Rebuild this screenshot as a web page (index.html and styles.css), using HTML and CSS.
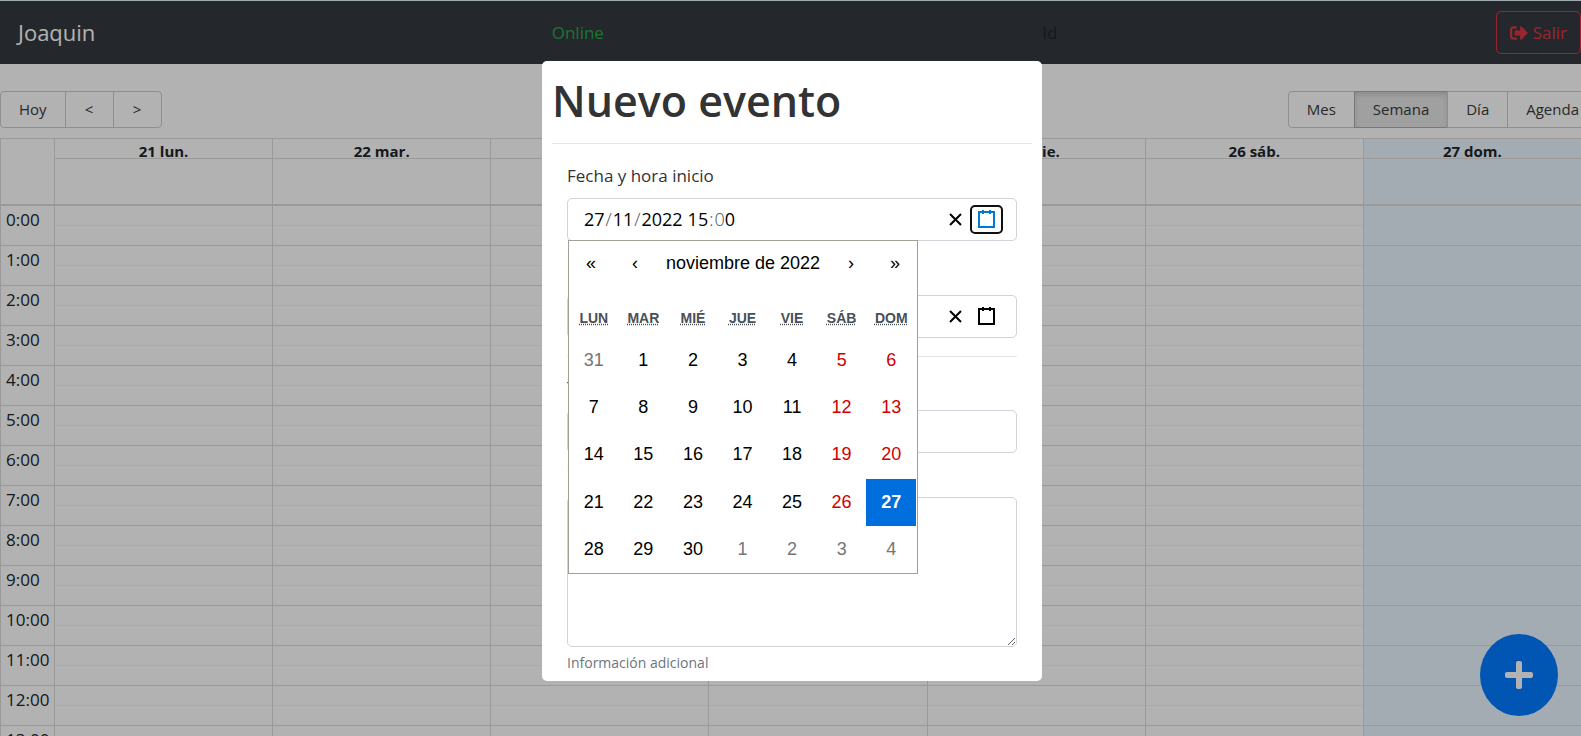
FILE: index.html
```html
<!DOCTYPE html>
<html lang="es">
<head>
<meta charset="utf-8">
<title>Calendario</title>
<link rel="stylesheet" href="styles.css">
</head>
<body>
<div class="app">
  <nav class="navbar">
    <span class="brand">Joaquin</span>
    <span class="status">Online</span>
    <span class="user-id">Id</span>
    <button type="button" class="logout"><svg viewBox="0 0 512 512" aria-hidden="true"><path fill="currentColor" d="M497 273L329 441c-15 15-41 4.500-41-17v-96H152c-13.300 0-24-10.700-24-24v-96c0-13.300 10.700-24 24-24h136V88c0-21.400 25.900-32 41-17l168 168c9.300 9.400 9.300 24.600 0 34zM192 436v-40c0-6.600-5.400-12-12-12H96c-17.700 0-32-14.300-32-32V160c0-17.700 14.300-32 32-32h84c6.600 0 12-5.400 12-12V76c0-6.600-5.400-12-12-12H96c-53 0-96 43-96 96v192c0 53 43 96 96 96h84c6.600 0 12-5.400 12-12z"/></svg>Salir</button>
  </nav>
  <div class="toolbar">
    <div class="btn-group">
      <button type="button">Hoy</button><button type="button">&lt;</button><button type="button">&gt;</button>
    </div>
    <div class="btn-group views">
      <button type="button">Mes</button><button type="button" class="active">Semana</button><button type="button">Día</button><button type="button">Agenda</button>
    </div>
  </div>
  <main class="week">
    <div class="week-header">
      <div class="corner"></div>
      <div class="day-head"><b>21 lun.</b></div>
      <div class="day-head"><b>22 mar.</b></div>
      <div class="day-head"><b>23 mié.</b></div>
      <div class="day-head"><b>24 jue.</b></div>
      <div class="day-head"><b>25 vie.</b></div>
      <div class="day-head"><b>26 sáb.</b></div>
      <div class="day-head today"><b>27 dom.</b></div>
    </div>
    <div class="week-body">
      <div class="gutter">
        <div>0:00</div><div>1:00</div><div>2:00</div><div>3:00</div><div>4:00</div><div>5:00</div><div>6:00</div><div>7:00</div><div>8:00</div><div>9:00</div><div>10:00</div><div>11:00</div><div>12:00</div><div>13:00</div>
      </div>
      <div class="day"></div><div class="day"></div><div class="day"></div><div class="day"></div><div class="day"></div><div class="day"></div><div class="day today"></div>
    </div>
  </main>
  <button type="button" class="fab" aria-label="Añadir evento"><svg viewBox="0 0 448 512" aria-hidden="true"><path fill="currentColor" d="M416 208H272V64c0-17.700-14.300-32-32-32h-32c-17.700 0-32 14.300-32 32v144H32c-17.700 0-32 14.300-32 32v32c0 17.700 14.300 32 32 32h144v144c0 17.700 14.300 32 32 32h32c17.700 0 32-14.300 32-32V304h144c17.700 0 32-14.300 32-32v-32c0-17.700-14.300-32-32-32z"/></svg></button>
</div>

<div class="overlay">
  <div class="modal" role="dialog" aria-labelledby="modal-title">
    <h1 id="modal-title">Nuevo evento</h1>
    <hr class="title-rule">
    <form class="form">
      <div class="field">
        <label for="start-day">Fecha y hora inicio</label>
        <div class="picker">
          <div class="parts">
            <input id="start-day" class="two" value="27" aria-label="Fecha y hora inicio, día"><span>/</span><input class="two" value="11" aria-label="Mes"><span>/</span><input class="four" value="2022" aria-label="Año"><span class="space"></span><input class="two" value="15" aria-label="Hora"><span>:</span><span>0</span><input class="one" value="0" aria-label="Minutos">
          </div>
          <button type="button" class="clear" aria-label="Borrar"><svg viewBox="0 0 19 19"><path d="M4 4L15 15M15 4L4 15"/></svg></button>
          <button type="button" class="open focused" aria-label="Abrir calendario"><svg viewBox="0 0 19 19"><path d="M2 2H17V17H2ZM6 0V4M13 0V4"/></svg></button>
          <div class="calendar">
            <div class="cal-nav">
              <button type="button">«</button><button type="button">‹</button><button type="button" class="cal-title">noviembre de 2022</button><button type="button">›</button><button type="button">»</button>
            </div>
            <div class="weekdays"><abbr title="lunes">LUN</abbr><abbr title="martes">MAR</abbr><abbr title="miércoles">MIÉ</abbr><abbr title="jueves">JUE</abbr><abbr title="viernes">VIE</abbr><abbr title="sábado">SÁB</abbr><abbr title="domingo">DOM</abbr></div>
            <div class="days">
              <button type="button" class="other">31</button><button type="button">1</button><button type="button">2</button><button type="button">3</button><button type="button">4</button><button type="button" class="weekend">5</button><button type="button" class="weekend">6</button>
              <button type="button">7</button><button type="button">8</button><button type="button">9</button><button type="button">10</button><button type="button">11</button><button type="button" class="weekend">12</button><button type="button" class="weekend">13</button>
              <button type="button">14</button><button type="button">15</button><button type="button">16</button><button type="button">17</button><button type="button">18</button><button type="button" class="weekend">19</button><button type="button" class="weekend">20</button>
              <button type="button">21</button><button type="button">22</button><button type="button">23</button><button type="button">24</button><button type="button">25</button><button type="button" class="weekend">26</button><button type="button" class="selected">27</button>
              <button type="button">28</button><button type="button">29</button><button type="button">30</button><button type="button" class="other">1</button><button type="button" class="other">2</button><button type="button" class="other">3</button><button type="button" class="other">4</button>
            </div>
          </div>
        </div>
      </div>
      <div class="field">
        <label for="end-day">Fecha y hora fin</label>
        <div class="picker">
          <div class="parts">
            <input id="end-day" class="two" value="27" aria-label="Fecha y hora fin, día"><span>/</span><input class="two" value="11" aria-label="Mes"><span>/</span><input class="four" value="2022" aria-label="Año"><span class="space"></span><input class="two" value="16" aria-label="Hora"><span>:</span><span>0</span><input class="one" value="0" aria-label="Minutos">
          </div>
          <button type="button" class="clear" aria-label="Borrar"><svg viewBox="0 0 19 19"><path d="M4 4L15 15M15 4L4 15"/></svg></button>
          <button type="button" class="open" aria-label="Abrir calendario"><svg viewBox="0 0 19 19"><path d="M2 2H17V17H2ZM6 0V4M13 0V4"/></svg></button>
        </div>
      </div>
      <hr class="form-rule">
      <div class="field">
        <label for="title">Título y notas</label>
        <input id="title" class="control" type="text">
        <small>Una descripción corta</small>
      </div>
      <div class="field">
        <textarea class="control notes" aria-label="Notas"></textarea>
        <small>Información adicional</small>
      </div>
    </form>
  </div>
</div>
</body>
</html>
```
FILE: styles.css
```css
* { box-sizing: border-box; }

body {
  margin: 0;
  height: 100vh;
  overflow: hidden;
  background: #fff;
  color: #212529;
  font: 400 17px/27px "Open Sans", "Noto Sans", sans-serif;
}

button, input, textarea { font: inherit; color: inherit; margin: 0; }

.app { height: 100vh; display: flex; flex-direction: column; overflow: hidden; }

/* Top bar */
.navbar {
  flex: none;
  display: flex;
  justify-content: space-between;
  align-items: center;
  padding: 10px 0 10px 18px;
  border-top: 1px solid #e4f4ff;
  background: #343a40;
}
.brand { margin-right: 18px; color: #fff; font-size: 22px; }
.status { color: #28a745; }
.logout {
  display: flex;
  align-items: center;
  gap: 5px;
  padding: 7px 13px;
  border: 1px solid #dc3545;
  border-radius: 5px;
  background: none;
  color: #dc3545;
}
.logout svg { width: 18px; height: 18px; }

/* Calendar toolbar */
.toolbar {
  flex: none;
  display: flex;
  justify-content: space-between;
  margin: 27px -17px 10px 0;
}
.btn-group { display: flex; }
.btn-group button {
  min-width: 49px;
  padding: 6px 18px;
  border: 1px solid #ccc;
  background: none;
  color: #373a3c;
  font-size: 15px;
  line-height: 23px;
}
.btn-group button + button { margin-left: -1px; }
.btn-group button:first-child { border-radius: 4px 0 0 4px; }
.btn-group button:last-child { border-radius: 0 4px 4px 0; }
.btn-group .active {
  border-color: #adadad;
  background: #e6e6e6;
  box-shadow: inset 0 3px 5px rgba(0, 0, 0, .125);
}

/* Week view */
.week { flex: 1; min-height: 0; overflow: hidden; border: 1px solid #ddd; border-bottom: 0; border-right: 0; }
.week-header, .week-body { display: grid; grid-template-columns: 53px repeat(7, 1fr); }
.week-header { height: 67px; border-bottom: 2px solid #ddd; }
.day-head, .day { border-left: 1px solid #ddd; }
.day-head b {
  display: block;
  height: 20px;
  border-bottom: 1px solid #ddd;
  text-align: center;
  font-size: 15px;
  line-height: 25px;
}
.gutter div { height: 40px; padding: 0 5px; border-bottom: 1px solid #ddd; }
.day {
  background-image: repeating-linear-gradient(transparent 0 19px, #f4f4f4 19px 20px, transparent 20px 39px, #ddd 39px 40px);
}
.today { background-color: #eaf6ff; }

.fab {
  position: fixed;
  right: 23px;
  bottom: 20px;
  width: 78px;
  height: 82px;
  padding: 0;
  border: 0;
  border-radius: 50%;
  background: #007bff;
  color: #fff;
}
.fab svg { display: block; width: 28px; height: 32px; margin: auto; }

/* Modal */
.overlay {
  position: fixed;
  inset: 0;
  display: flex;
  justify-content: center;
  align-items: center;
  padding: 6px 0 0 3px;
  background: rgba(0, 0, 0, .3);
}
.modal {
  width: 500px;
  max-width: 100%;
  padding: 10px 10px 8px;
  border-radius: 5px;
  background: #fff;
}
h1 { margin: 0; font-size: 43px; line-height: 60px; font-weight: 600; color: #333; }
hr { margin: 0; border: 0; border-top: 1px solid #e5e5e5; }
.title-rule { margin-top: 12px; }
.form { padding: 18px 15px 0; }
.field { margin-bottom: 18px; }
.field:last-child { margin-bottom: 0; }
.field label { display: block; margin-bottom: 9px; color: #333; line-height: 27px; }
.form-rule { margin-bottom: 17px; }
.control {
  display: block;
  width: 100%;
  height: 43px;
  padding: 7px 14px;
  border: 1px solid #ced4da;
  border-radius: 5px;
  background: #fff;
}
.notes { height: 150px; resize: vertical; }
small { display: block; margin-top: 5px; font-size: 14px; line-height: 21px; color: #6c757d; }

/* Date picker */
.picker {
  position: relative;
  display: flex;
  align-items: center;
  height: 43px;
  padding: 0 13px 0 16px;
  border: 1px solid #ced4da;
  border-radius: 5px;
  color: #000;
}
.parts { flex: 1; display: flex; font-size: 18px; }
.parts span { color: #495057; font-weight: 300; }
.parts input { padding: 0; border: 0; outline: 0; background: none; }
.parts input + span { padding: 0 1px; }
.parts .space { width: 5px; }
.one { width: 1ch; }
.two { width: 2ch; }
.four { width: 4ch; }
.clear, .open {
  display: flex;
  padding: 3px 5px;
  border: 2px solid transparent;
  border-radius: 5px;
  background: none;
}
.clear { padding: 3px; }
.clear svg, .open svg { width: 19px; height: 19px; fill: none; stroke: #000; stroke-width: 2; }
.open.focused { border-color: #101010; }
.open.focused svg { stroke: #0078d7; }

.calendar {
  position: absolute;
  z-index: 1;
  top: 41px;
  left: 0;
  width: 350px;
  border: 1px solid #a0a096;
  background: #fff;
  font: 18px/21px "Liberation Sans", Arial, sans-serif;
}
.calendar button { padding: 0; border: 0; background: none; }
.cal-nav { display: flex; height: 44px; margin-bottom: 18px; }
.cal-nav button { width: 44px; }
.cal-nav .cal-title { flex: 1; }
.weekdays, .days { display: grid; grid-template-columns: repeat(7, 1fr); padding-right: 1px; }
.weekdays {
  justify-items: center;
  padding-top: 5px;
  padding-bottom: 8px;
  font-size: 14px;
  font-weight: 700;
  color: #495057;
}
.weekdays abbr { text-decoration: underline dotted; }
.days { height: 236px; grid-auto-rows: 1fr; }
.days button { height: 47px; }
.days .weekend { color: #d10000; }
.days .other { color: #757575; }
.days .selected { background: #006edc; color: #fff; font-weight: 700; }
```
